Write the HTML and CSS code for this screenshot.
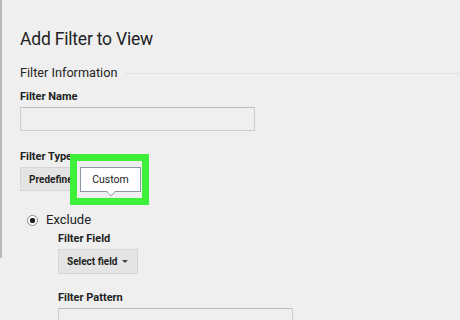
FILE: index.html
```html
<!DOCTYPE html>
<html lang="en">
<head>
    <meta charset="UTF-8">
    <title>Add Filter to View</title>
    <link rel="stylesheet" href="styles.css">
</head>
<body>
    <div class="page">
        <div class="rail"></div>
        <div class="content">
            <h1>Add Filter to View</h1>
            <div class="section">
                <span>Filter Information</span>
                <div class="rule"></div>
            </div>

            <div class="label first">Filter Name</div>
            <div class="input"></div>

            <div class="label gap">Filter Type</div>
            <div class="type-row">
                <div class="btn">Predefined</div>
                <div class="highlight">
                    <div class="tip">Custom</div>
                </div>
            </div>

            <div class="radio-row">
                <span class="radio"></span>
                <span>Exclude</span>
            </div>

            <div class="sub">
                <div class="label near">Filter Field</div>
                <div class="btn select">Select field <span class="caret"></span></div>

                <div class="label pattern">Filter Pattern</div>
                <div class="input"></div>
            </div>
        </div>
    </div>
</body>
</html>
```
FILE: styles.css
```css
body {
    margin: 0;
    background-color: #efefef;
    font-family: Roboto, "Liberation Sans", sans-serif;
    color: #222;
    overflow: hidden;
}
.page {
    display: flex;
}
.rail {
    width: 2px;
    height: 258px;
    background-color: #b9b9b9;
    flex: none;
}
.content {
    flex: 1;
    padding: 28px 0 0 18px;
}
h1 {
    margin: 0;
    font-size: 17.5px;
    line-height: 22px;
    font-weight: 400;
    letter-spacing: -0.2px;
}
.section {
    display: flex;
    align-items: center;
    gap: 8px;
    margin-top: 15px;
    font-size: 12.7px;
    line-height: 16px;
}
.rule {
    flex: 1;
    height: 1px;
    background-color: #e2e2e2;
}
.label {
    font-size: 11px;
    line-height: 13px;
    font-weight: 700;
    margin-bottom: 4px;
}
.label.first {
    margin-top: 9px;
}
.label.gap {
    margin-top: 19px;
}
.label.near {
    margin-top: 4px;
}
.label.pattern {
    margin-top: 17px;
}
.input {
    width: 233px;
    height: 22px;
    border: 1px solid #cdcdcd;
    border-top-color: #bdbdbd;
    background-color: #efefef;
}
.type-row {
    position: relative;
    height: 24px;
}
.btn {
    display: inline-flex;
    align-items: center;
    box-sizing: border-box;
    height: 24px;
    padding: 0 8px;
    background-color: #e4e4e4;
    border: 1px solid #d6d6d6;
    font-size: 10px;
    font-weight: 700;
    white-space: nowrap;
}
.highlight {
    position: absolute;
    left: 50px;
    top: -13px;
    width: 65px;
    height: 37px;
    border: 7px solid #3ff03b;
    background-color: #efefef;
}
.tip {
    position: absolute;
    left: 3px;
    top: 6px;
    width: 59px;
    height: 23px;
    background-color: #fff;
    border: 1px solid #8d98a6;
    font-size: 10.5px;
    line-height: 23px;
    text-align: center;
}
.tip::after {
    content: "";
    position: absolute;
    left: 26px;
    bottom: -5px;
    width: 7px;
    height: 7px;
    background-color: #fff;
    border-right: 1px solid #8d98a6;
    border-bottom: 1px solid #8d98a6;
    transform: rotate(45deg) scale(0.75);
}
.radio-row {
    display: flex;
    align-items: center;
    gap: 8px;
    margin: 21px 0 0 7px;
    font-size: 13px;
    line-height: 16px;
}
.radio {
    box-sizing: border-box;
    width: 11px;
    height: 11px;
    border: 1px solid #888;
    border-radius: 50%;
    background: radial-gradient(circle, #222 2.5px, #fff 3px);
}
.sub {
    margin-left: 38px;
}
.select {
    width: 80px;
    height: 25px;
    justify-content: space-between;
    padding: 0 9px 0 8px;
}
.caret {
    width: 0;
    height: 0;
    border-left: 3px solid transparent;
    border-right: 3px solid transparent;
    border-top: 3px solid #444;
}
```
